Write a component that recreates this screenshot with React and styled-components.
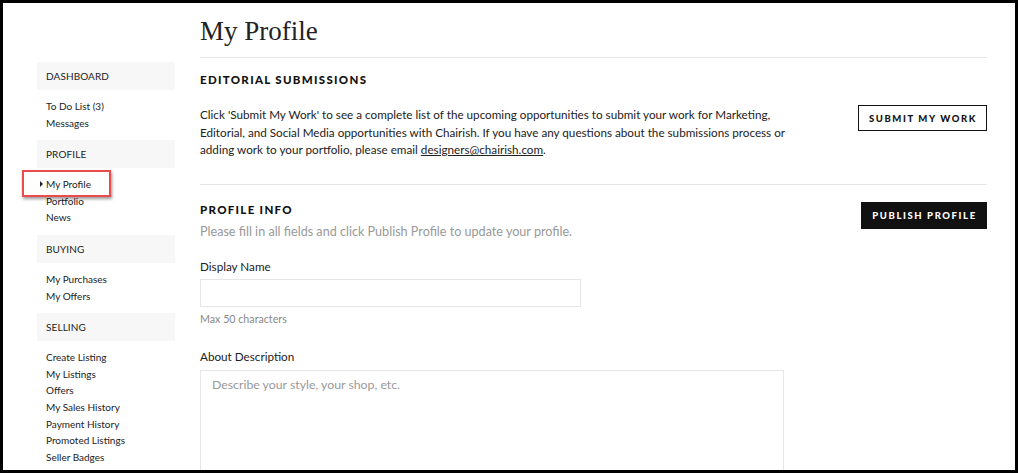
import React from "react";
import styled, { createGlobalStyle } from "styled-components";

const Global = createGlobalStyle`
  html, body { margin: 0; padding: 0; background: #fff; }
  body { font-family: "Lato", "Open Sans", sans-serif; color: #222; }
  * { box-sizing: border-box; }
`;

const Frame = styled.div`
  position: relative;
  width: 1018px;
  height: 473px;
  border: 3px solid #000;
  overflow: hidden;
  display: flex;
  align-items: flex-start;
  gap: 25px;
  padding-left: 34px;
  background: #fff;
`;

const Sidebar = styled.nav`
  width: 138px;
  flex: none;
  padding-top: 59px;
  display: flex;
  flex-direction: column;
`;

const Group = styled.div`
  flex: none;
  display: flex;
  flex-direction: column;
  margin-bottom: 9px;
`;

const GroupHead = styled.div`
  flex: none;
  height: 28px;
  background: #f7f7f7;
  padding-left: 9px;
  display: flex;
  align-items: center;
  font-size: 10px;
  color: #222;
  letter-spacing: 0.1px;
`;

const Items = styled.ul`
  list-style: none;
  margin: 0;
  padding: 8px 0 0 9px;
`;

const Item = styled.li`
  position: relative;
  font-size: 10px;
  line-height: 16.6px;
  color: #222;
  &::before {
    content: "";
    display: ${(p) => (p.$active ? "block" : "none")};
    position: absolute;
    left: -6px;
    top: 5px;
    border-left: 3px solid #222;
    border-top: 3px solid transparent;
    border-bottom: 3px solid transparent;
  }
`;

const Highlight = styled.div`
  position: absolute;
  left: 19px;
  top: 167px;
  width: 89px;
  height: 27px;
  border: 2px solid #ea4b4b;
  box-shadow: 1px 2px 3px rgba(0, 0, 0, 0.4);
  pointer-events: none;
`;

const Main = styled.main`
  width: 787px;
  flex: none;
  display: flex;
  flex-direction: column;
`;

const Title = styled.h1`
  flex: none;
  margin: 0;
  padding-top: 10px;
  height: 55px;
  font-family: "Liberation Serif", "Times New Roman", serif;
  font-weight: 400;
  font-size: 27px;
  line-height: 36px;
  color: #222;
  border-bottom: 1px solid #e6e6e6;
`;

const Section = styled.section`
  flex: none;
  display: flex;
  justify-content: space-between;
  align-items: flex-start;
  padding: ${(p) => p.$pad};
  border-bottom: ${(p) => (p.$divider ? "1px solid #e6e6e6" : "none")};
`;

const SectionBody = styled.div`
  display: flex;
  flex-direction: column;
`;

const Heading = styled.h2`
  margin: 0;
  font-family: "Lato", sans-serif;
  font-weight: 900;
  font-size: 11.5px;
  letter-spacing: 1.3px;
  line-height: 16px;
  color: #111;
  text-transform: uppercase;
`;

const Paragraph = styled.p`
  margin: 18px 0 0;
  width: 596px;
  font-size: 11.7px;
  line-height: 17.5px;
  color: #222;
  a { color: #222; text-decoration: underline; }
`;

const Hint = styled.p`
  margin: 6px 0 0;
  font-size: 12.6px;
  line-height: 16px;
  color: #999;
`;

const Button = styled.button`
  flex: none;
  font-family: "Lato", sans-serif;
  font-weight: 900;
  font-size: 9.5px;
  letter-spacing: 1.6px;
  text-transform: uppercase;
  cursor: pointer;
  border: 1px solid #111;
  background: ${(p) => (p.$dark ? "#111" : "#fff")};
  color: ${(p) => (p.$dark ? "#fff" : "#111")};
  width: ${(p) => p.$w}px;
  height: ${(p) => p.$h}px;
  margin-top: ${(p) => p.$mt}px;
  padding: 0 0 0 1px;
`;

const Field = styled.div`
  display: flex;
  flex-direction: column;
  margin-top: ${(p) => p.$mt}px;
`;

const Label = styled.label`
  font-size: 11.7px;
  line-height: 16px;
  color: #222;
  margin-bottom: ${(p) => p.$mb}px;
`;

const TextInput = styled.input`
  width: 381px;
  height: 28px;
  border: 1px solid #e6e6e6;
  outline: none;
  font-family: inherit;
`;

const Small = styled.span`
  font-size: 10.7px;
  color: #888;
  margin-top: 6px;
  line-height: 12px;
`;

const TextArea = styled.textarea`
  width: 584px;
  height: 120px;
  border: 1px solid #e6e6e6;
  outline: none;
  resize: none;
  font-family: "Lato", sans-serif;
  font-size: 12.3px;
  padding: 6px 11px;
  &::placeholder { color: #999; }
`;

const groups = [
  { head: "DASHBOARD", items: ["To Do List (3)", "Messages"] },
  { head: "PROFILE", items: ["My Profile", "Portfolio", "News"], active: "My Profile" },
  { head: "BUYING", items: ["My Purchases", "My Offers"] },
  {
    head: "SELLING",
    items: [
      "Create Listing",
      "My Listings",
      "Offers",
      "My Sales History",
      "Payment History",
      "Promoted Listings",
      "Seller Badges",
    ],
  },
];

export default function App() {
  return (
    <>
      <Global />
      <Frame>
        <Sidebar>
          {groups.map((g) => (
            <Group key={g.head}>
              <GroupHead>{g.head}</GroupHead>
              <Items>
                {g.items.map((it) => (
                  <Item key={it} $active={g.active === it}>
                    {it}
                  </Item>
                ))}
              </Items>
            </Group>
          ))}
        </Sidebar>
        <Main>
          <Title>My Profile</Title>
          <Section $pad="14px 0 25px" $divider>
            <SectionBody>
              <Heading>Editorial Submissions</Heading>
              <Paragraph>
                Click 'Submit My Work' to see a complete list of the upcoming opportunities to submit
                your work for Marketing, Editorial, and Social Media opportunities with Chairish. If you
                have any questions about the submissions process or adding work to your portfolio,
                please email <a href="#">designers@chairish.com</a>.
              </Paragraph>
            </SectionBody>
            <Button $w={129} $h={26} $mt={33}>Submit My Work</Button>
          </Section>
          <Section $pad="17px 0 0">
            <SectionBody>
              <Heading>Profile Info</Heading>
              <Hint>Please fill in all fields and click Publish Profile to update your profile.</Hint>
              <Field $mt={18}>
                <Label $mb={5}>Display Name</Label>
                <TextInput type="text" />
                <Small>Max 50 characters</Small>
              </Field>
              <Field $mt={23}>
                <Label $mb={6}>About Description</Label>
                <TextArea placeholder="Describe your style, your shop, etc." />
              </Field>
            </SectionBody>
            <Button $dark $w={126} $h={27} $mt={0}>Publish Profile</Button>
          </Section>
        </Main>
        <Highlight />
      </Frame>
    </>
  );
}
